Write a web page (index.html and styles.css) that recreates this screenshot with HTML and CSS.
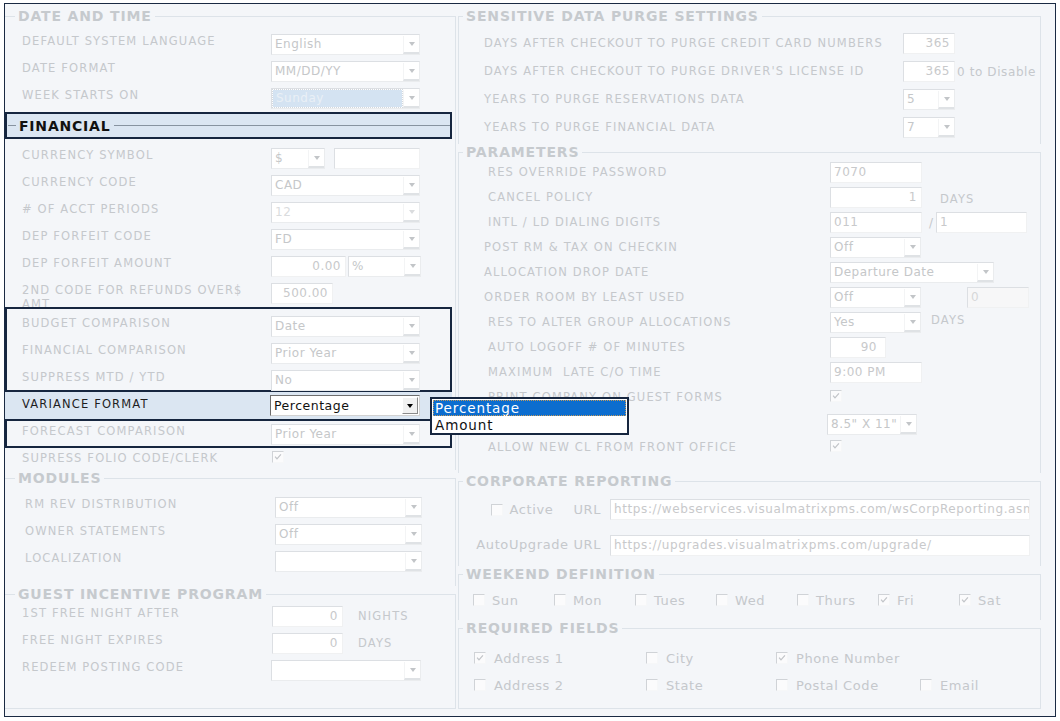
FILE: index.html
```html
<!DOCTYPE html>
<html>
<head>
<meta charset="utf-8">
<link rel="stylesheet" href="styles.css">
</head>
<body>
<div class="frame">
  <div class="cols">
    <div class="col">
      <fieldset class="fs fsl fs-date">
        <legend>DATE AND TIME</legend>
        <div class="row"><span class="lbl">DEFAULT SYSTEM LANGUAGE</span><div class="sel w149"><span class="v">English</span><i class="arr"></i></div></div>
        <div class="row"><span class="lbl">DATE FORMAT</span><div class="sel w149"><span class="v">MM/DD/YY</span><i class="arr"></i></div></div>
        <div class="row"><span class="lbl">WEEK STARTS ON</span><div class="sel w149 selhl"><span class="v">Sunday</span><i class="arr"></i></div></div>
      </fieldset>
      <div class="fin">
        <div class="band"><span class="dash"></span><span class="bt">FINANCIAL</span><span class="bline"></span></div>
        <div class="finrows">
          <div class="row"><span class="lbl">CURRENCY SYMBOL</span><div class="sel w54"><span class="v">$</span><i class="arr"></i></div><div class="inp w86 ml9"></div></div>
          <div class="row"><span class="lbl">CURRENCY CODE</span><div class="sel w149"><span class="v">CAD</span><i class="arr"></i></div></div>
          <div class="row"><span class="lbl">#&nbsp;OF ACCT PERIODS</span><div class="sel w149 dis"><span class="v">12</span><i class="arr"></i></div></div>
          <div class="row"><span class="lbl">DEP FORFEIT CODE</span><div class="sel w149"><span class="v">FD</span><i class="arr"></i></div></div>
          <div class="row"><span class="lbl">DEP FORFEIT AMOUNT</span><div class="inp w75 r">0.00</div><div class="sel w73 ml2"><span class="v">%</span><i class="arr"></i></div></div>
          <div class="row clip"><span class="lbl wrap">2ND CODE FOR REFUNDS OVER$ AMT</span><div class="inp w62 r">500.00</div></div>
        </div>
        <div class="group">
          <div class="row g first"><span class="lbl">BUDGET COMPARISON</span><div class="sel w149"><span class="v">Date</span><i class="arr"></i></div></div>
          <div class="row g"><span class="lbl">FINANCIAL COMPARISON</span><div class="sel w149"><span class="v">Prior Year</span><i class="arr"></i></div></div>
          <div class="row g short"><span class="lbl">SUPPRESS MTD / YTD</span><div class="sel w149"><span class="v">No</span><i class="arr"></i></div></div>
          <div class="row g var"><span class="lbl dark">VARIANCE FORMAT</span><div class="sel w150 act"><span class="v">Percentage</span><i class="arr"></i></div></div>
          <div class="row g last"><span class="lbl">FORECAST COMPARISON</span><div class="sel w149"><span class="v">Prior Year</span><i class="arr"></i></div></div>
        </div>
        <div class="row folio"><span class="lbl">SUPRESS FOLIO CODE/CLERK</span><span class="cb on cbl"><svg viewBox="0 0 12 12"><path d="M2.5 5.5 L4.8 8.2 L9.5 2.8"/></svg></span></div>
      </div>
      <fieldset class="fs fsl fs-mod">
        <legend>MODULES</legend>
        <div class="row m"><span class="lbl">RM REV DISTRIBUTION</span><div class="sel w147"><span class="v">Off</span><i class="arr"></i></div></div>
        <div class="row m"><span class="lbl">OWNER STATEMENTS</span><div class="sel w147"><span class="v">Off</span><i class="arr"></i></div></div>
        <div class="row m"><span class="lbl">LOCALIZATION</span><div class="sel w147"><span class="v"></span><i class="arr"></i></div></div>
      </fieldset>
      <fieldset class="fs fsl fs-guest">
        <legend>GUEST INCENTIVE PROGRAM</legend>
        <div class="row gu"><span class="lbl">1ST FREE NIGHT AFTER</span><div class="inp w71 r">0</div><span class="lbl unit">NIGHTS</span></div>
        <div class="row"><span class="lbl">FREE NIGHT EXPIRES</span><div class="inp w71 r ml1">0</div><span class="lbl unit">DAYS</span></div>
        <div class="row"><span class="lbl">REDEEM POSTING CODE</span><div class="sel w150"><span class="v"></span><i class="arr"></i></div></div>
      </fieldset>
    </div>

    <div class="col">
      <fieldset class="fs fsr fs-sens">
        <legend>SENSITIVE DATA PURGE SETTINGS</legend>
        <div class="srow"><span class="lbl">DAYS AFTER CHECKOUT TO PURGE CREDIT CARD NUMBERS</span><div class="inp w52 r">365</div></div>
        <div class="srow"><span class="lbl">DAYS AFTER CHECKOUT TO PURGE DRIVER'S LICENSE ID</span><div class="inp w52 r">365</div><span class="txt dis0">0 to Disable</span></div>
        <div class="srow"><span class="lbl">YEARS TO PURGE RESERVATIONS DATA</span><div class="sel w52"><span class="v">5</span><i class="arr"></i></div></div>
        <div class="srow lastr"><span class="lbl">YEARS TO PURGE FINANCIAL DATA</span><div class="sel w52"><span class="v">7</span><i class="arr"></i></div></div>
      </fieldset>
      <fieldset class="fs fsr fs-par">
        <legend>PARAMETERS</legend>
        <div class="prow"><span class="lbl">RES OVERRIDE PASSWORD</span><div class="inp w92">7070</div></div>
        <div class="prow"><span class="lbl">CANCEL POLICY</span><div class="inp w92 r">1</div><span class="lbl unit2">DAYS</span></div>
        <div class="prow"><span class="lbl">INTL / LD DIALING DIGITS</span><div class="inp w92">011</div><span class="slash">/</span><div class="inp w91">1</div></div>
        <div class="prow i4"><span class="lbl">POST RM &amp; TAX ON CHECKIN</span><div class="sel w91"><span class="v">Off</span><i class="arr"></i></div></div>
        <div class="prow i4"><span class="lbl">ALLOCATION DROP DATE</span><div class="sel w164"><span class="v">Departure Date</span><i class="arr"></i></div></div>
        <div class="prow i4"><span class="lbl">ORDER ROOM BY LEAST USED</span><div class="sel w91"><span class="v">Off</span><i class="arr"></i></div><div class="inp w62 ml46 grey">0</div></div>
        <div class="prow"><span class="lbl">RES TO ALTER GROUP ALLOCATIONS</span><div class="sel w91"><span class="v">Yes</span><i class="arr"></i></div><span class="lbl unit3">DAYS</span></div>
        <div class="prow"><span class="lbl">AUTO LOGOFF # OF MINUTES</span><div class="inp w56 r rp">90</div></div>
        <div class="prow"><span class="lbl">MAXIMUM&nbsp; LATE C/O TIME</span><div class="inp w92">9:00 PM</div></div>
        <div class="prow"><span class="lbl">PRINT COMPANY ON GUEST FORMS</span><span class="cb on cbp"><svg viewBox="0 0 12 12"><path d="M2.5 5.5 L4.8 8.2 L9.5 2.8"/></svg></span></div>
        <div class="prow"><span class="lbl"></span><div class="sel w90 ml-3 mt2"><span class="v">8.5" X 11"</span><i class="arr"></i></div></div>
        <div class="prow"><span class="lbl">ALLOW NEW CL FROM FRONT OFFICE</span><span class="cb on cbp"><svg viewBox="0 0 12 12"><path d="M2.5 5.5 L4.8 8.2 L9.5 2.8"/></svg></span></div>
      </fieldset>
      <fieldset class="fs fsr fs-corp">
        <legend>CORPORATE REPORTING</legend>
        <div class="crow"><div class="clab"><span class="cb"></span><span class="txt act-t">Active</span><span class="txt">URL</span></div><div class="inp w420 url">https://webservices.visualmatrixpms.com/wsCorpReporting.asmx</div></div>
        <div class="crow c2"><div class="clab"><span class="txt">AutoUpgrade URL</span></div><div class="inp w420 url">https://upgrades.visualmatrixpms.com/upgrade/</div></div>
      </fieldset>
      <fieldset class="fs fsr fs-week">
        <legend>WEEKEND DEFINITION</legend>
        <div class="wrow">
          <label class="ck"><span class="cb"></span><span class="txt">Sun</span></label>
          <label class="ck"><span class="cb"></span><span class="txt">Mon</span></label>
          <label class="ck"><span class="cb"></span><span class="txt">Tues</span></label>
          <label class="ck"><span class="cb"></span><span class="txt">Wed</span></label>
          <label class="ck"><span class="cb"></span><span class="txt">Thurs</span></label>
          <label class="ck"><span class="cb on"><svg viewBox="0 0 12 12"><path d="M2.5 5.5 L4.8 8.2 L9.5 2.8"/></svg></span><span class="txt">Fri</span></label>
          <label class="ck"><span class="cb on"><svg viewBox="0 0 12 12"><path d="M2.5 5.5 L4.8 8.2 L9.5 2.8"/></svg></span><span class="txt">Sat</span></label>
        </div>
      </fieldset>
      <fieldset class="fs fsr fs-req">
        <legend>REQUIRED FIELDS</legend>
        <div class="rgrid">
          <label class="ck"><span class="cb on"><svg viewBox="0 0 12 12"><path d="M2.5 5.5 L4.8 8.2 L9.5 2.8"/></svg></span><span class="txt">Address 1</span></label>
          <label class="ck"><span class="cb"></span><span class="txt">City</span></label>
          <label class="ck"><span class="cb on"><svg viewBox="0 0 12 12"><path d="M2.5 5.5 L4.8 8.2 L9.5 2.8"/></svg></span><span class="txt">Phone Number</span></label>
          <span></span>
          <label class="ck"><span class="cb"></span><span class="txt">Address 2</span></label>
          <label class="ck"><span class="cb"></span><span class="txt">State</span></label>
          <label class="ck"><span class="cb"></span><span class="txt">Postal Code</span></label>
          <label class="ck"><span class="cb"></span><span class="txt">Email</span></label>
        </div>
      </fieldset>
    </div>
  </div>

  <div class="popup">
    <div class="opt sel-opt">Percentage</div>
    <div class="opt">Amount</div>
  </div>
</div>
</body>
</html>
```

FILE: styles.css
```css
* { box-sizing: border-box; }
html, body { margin: 0; padding: 0; background: #ffffff; }
body { font-family: "DejaVu Sans", Verdana, sans-serif; }

.frame {
  position: relative;
  margin: 3px 0 0 4px;
  width: 1052px;
  height: 714px;
  border: 1px solid #1a2a43;
  background: #f4f6f9;
  overflow: hidden;
}

.cols {
  display: grid;
  grid-template-columns: 451px 583px;
  column-gap: 2px;
  padding-top: 4px;
}
.col { display: flex; flex-direction: column; }

.fs {
  margin: 0;
  padding: 0;
  min-width: 0;
  border: 1px solid #dde3e9;
}
.fs legend {
  font-size: 14px;
  line-height: 16px;
  font-weight: bold;
  letter-spacing: 0.85px;
  color: #c6cace;
  padding: 0 3px;
}
.fsl { border-left: none; border-bottom: none; }
.fsl legend { margin-left: 10px; }
.fsr legend { margin-left: 4px; }
.fsr { border-bottom: none; }

.fs-date { padding-top: 7px; }
.fs-mod { padding-top: 8px; padding-bottom: 11px; }
.fs-guest { padding-top: 1px; height: 123px; border-bottom: 1px solid #dde3e9; }

.lbl {
  font-size: 11.5px;
  line-height: 14px;
  letter-spacing: 1.15px;
  color: #c5c8cc;
  white-space: nowrap;
}
.lbl.dark { color: #1e1e1e; }
.txt {
  font-size: 13px;
  letter-spacing: 0.6px;
  color: #c5c8cc;
  white-space: nowrap;
}

/* left rows */
.row {
  display: flex;
  align-items: flex-start;
  height: 27px;
  padding-left: 17px;
}
.row .lbl { width: 249px; flex: none; padding-top: 3px; }
.row > .sel, .row > .inp { margin-top: 3px; }
.row.m { padding-left: 20px; }
.row.m .lbl { width: 250px; }
.row.gu > .inp { margin-left: 1px; }
.ml1 { margin-left: 1px; }
.row .unit { width: auto; margin-left: 15px; padding-top: 6px; }
.row.clip { overflow: hidden; }
.row .lbl.wrap { white-space: normal; padding-right: 6px; }

/* financial */
.fin {
  border-right: 1px solid #dde3e9;
  padding-right: 3px;
}
.band {
  display: flex;
  align-items: center;
  height: 27px;
  background: #dbe6f2;
  border: 2px solid #16263f;
}
.band .dash { width: 8px; height: 1px; background: #8793a0; margin-left: 1px; }
.band .bt {
  font-size: 14px;
  font-weight: bold;
  letter-spacing: 0.8px;
  color: #111;
  padding: 0 4px 0 3px;
}
.band .bline { flex: 1; height: 1px; background: #8793a0; }
.finrows { padding-top: 6px; }

.group {
  position: relative;
  border: 2px solid #16263f;
  padding-top: 4px;
}
.row.g { padding-left: 15px; }
.row.g.short { height: 23px; }
.row.g.var {
  height: 31px;
  background: #dbe6f2;
  border-top: 2px solid #16263f;
  border-bottom: 2px solid #16263f;
  margin: 0 -2px;
  padding-left: 17px;
}
.row.g.var .lbl { padding-top: 5px; }
.row.g.var > .sel { margin-top: 3px; margin-left: -1px; }
.row.g.last { height: 25px; }
.row.folio { height: 22px; }
.cbl { margin-top: 3px; margin-left: 1px; }

/* controls */
.inp {
  height: 21px;
  background: #ffffff;
  border: 1px solid;
  border-color: #dcdfe3 #f0f1f2 #f0f1f2 #dcdfe3;
  font-size: 12px;
  line-height: 19px;
  letter-spacing: 0.5px;
  color: #c8c9cb;
  padding: 0 4px 0 3px;
  white-space: nowrap;
  overflow: hidden;
  flex: none;
}
.inp.r { text-align: right; }
.inp.rp { padding-right: 8px; }
.inp.grey { background: #f7f7f8; color: #d6d7d8; }
.sel {
  display: flex;
  height: 21px;
  background: #ffffff;
  border: 1px solid;
  border-color: #dcdfe3 #eaecee #eaecee #dcdfe3;
  flex: none;
}
.sel .v {
  flex: 1;
  font-size: 12px;
  line-height: 19px;
  letter-spacing: 0.5px;
  color: #c5c7c9;
  padding-left: 3px;
  white-space: nowrap;
  overflow: hidden;
}
.sel .arr {
  width: 16px;
  margin: 1px 0 0 0;
  border-bottom: 2px solid #dfe2e5;
  border-left: 1px solid #f3f4f5;
  display: flex;
  align-items: center;
  justify-content: center;
}
.sel .arr::after {
  content: "";
  border-top: 4px solid #c2c5c8;
  border-left: 3.5px solid transparent;
  border-right: 3.5px solid transparent;
}
.sel.dis .v { color: #dadcde; }
.sel.dis .arr::after { border-top-color: #dadcde; }
.sel.selhl .v { background: #d4e3f2; color: #eaf0f6; margin: 1px; line-height: 17px; outline: 1px dotted #d3d8de; }
.sel.act {
  border-color: #6e6e6e #d2d2d2 #d2d2d2 #6e6e6e;
}
.sel.act .v { color: #111; font-size: 12.5px; }
.sel.act .arr {
  margin: 1px;
  width: 16px;
  background: #f1f1f1;
  border: 1px solid;
  border-color: #ffffff #8a8a8a #8a8a8a #ffffff;
}
.sel.act .arr::after { border-top-color: #000; border-top-width: 4px; }

.w149 { width: 149px; }
.w150 { width: 150px; }
.w147 { width: 147px; }
.w54 { width: 54px; }
.w86 { width: 86px; }
.w75 { width: 75px; }
.w73 { width: 73px; }
.w62 { width: 62px; }
.w71 { width: 71px; }
.w52 { width: 52px; }
.w92 { width: 92px; }
.w91 { width: 91px; }
.w90 { width: 90px; }
.w164 { width: 164px; }
.w56 { width: 56px; }
.w420 { width: 420px; }
.ml9 { margin-left: 9px; }
.ml2 { margin-left: 2px; }
.ml46 { margin-left: 46px; }
.ml-3 { margin-left: -3px; }

/* checkbox */
.cb {
  display: inline-block;
  width: 12px;
  height: 12px;
  flex: none;
  border: 1px solid;
  border-color: #d0d3d7 #f6f7f8 #f6f7f8 #d0d3d7;
  background: #fbfbfc;
}
.cb svg { display: block; width: 10px; height: 10px; }
.cb svg path { fill: none; stroke: #c1c4c8; stroke-width: 1.5; }

/* right: sensitive */
.fs-sens { padding-top: 9px; }
.srow { display: flex; align-items: flex-start; height: 28px; }
.srow.lastr { height: 27px; }
.srow .lbl { width: 444px; padding-left: 25px; padding-top: 3px; flex: none; }
.srow .dis0 { font-size: 12px; margin-left: 2px; line-height: 22px; }

/* parameters */
.fs-par { padding-top: 2px; padding-bottom: 11px; }
.prow { display: flex; align-items: flex-start; height: 25px; }
.prow .lbl { width: 371px; padding-left: 29px; padding-top: 3px; flex: none; }
.prow.i4 .lbl { padding-left: 25px; }
.prow .unit2 { width: auto; padding-left: 18px; padding-top: 5px; }
.prow .unit3 { width: auto; padding-left: 10px; padding-top: 1px; }
.prow .slash { font-size: 12px; color: #c5c8cc; line-height: 22px; margin: 0 3px 0 7px; }
.cbp { margin-top: 3px; }
.mt2 { margin-top: 2px !important; }

/* corporate */
.fs-corp { padding-top: 10px; padding-bottom: 10px; }
.crow { display: flex; height: 35px; }
.crow.c2 { height: 22px; }
.crow.c2 > .inp { margin-top: 1px; }
.clab {
  width: 151px;
  display: flex;
  align-items: center;
  justify-content: flex-end;
  height: 21px;
  padding-right: 9px;
  flex: none;
}
.clab .cb { margin-right: 7px; }
.clab .act-t { margin-right: 20px; }
.inp.url { font-size: 12px; letter-spacing: 0.6px; padding-left: 3px; }

/* weekend */
.fs-week { padding-top: 8px; padding-bottom: 10px; }
.wrow { display: flex; height: 20px; padding-left: 14px; }
.wrow .ck { width: 83.5px; }
.ck { display: flex; align-items: center; height: 20px; }
.ck .cb { margin-right: 7px; }

/* required */
.fs-req { padding-top: 12px; height: 89px; border-bottom: 1px solid #dde3e9; }
.rgrid {
  display: grid;
  grid-template-columns: 172px 130px 144px auto;
  grid-auto-rows: 20px;
  row-gap: 7px;
  padding-left: 15px;
}
.rgrid .ck .cb { margin-right: 8px; }

/* popup */
.popup {
  position: absolute;
  left: 425px;
  top: 393px;
  width: 199px;
  height: 38px;
  border: 2px solid #16263f;
  background: #ffffff;
  padding: 1px;
}
.opt {
  height: 16px;
  font-size: 13.5px;
  line-height: 16px;
  letter-spacing: 0.9px;
  color: #111;
  padding-left: 2px;
}
.opt.sel-opt {
  background: #0c6dcf;
  color: #ffffff;
  outline: 1px dotted #c49a5a;
  outline-offset: -1px;
  margin-bottom: 1px;
}
```
